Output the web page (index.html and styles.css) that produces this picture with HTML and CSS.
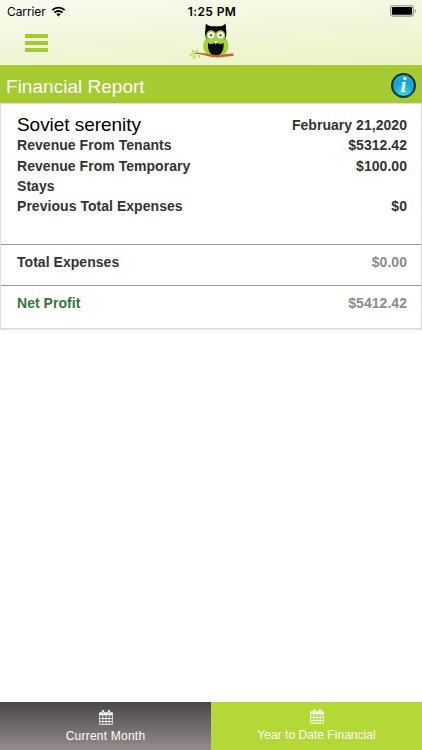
FILE: index.html
```html
<!DOCTYPE html>
<html>
	<head>
		<meta charset="utf-8" />
		<title>Financial Report</title>
		<link rel="stylesheet" href="styles.css">
	</head>
	<body>
		<div class="header">
			<div class="status">
				<div class="carrier">
					<span>Carrier</span>
					<svg width="15" height="11" viewBox="0 0 14 11">
						<path d="M.8 4.200a8.800 8.800 0 0 1 12.400 0M3 6.600a5.700 5.700 0 0 1 8 0" fill="none" stroke="#000" stroke-width="1.900"/>
						<path d="M4.800 8.200a3.200 3.200 0 0 1 4.400 0L7 10.600z"/>
					</svg>
				</div>
				<div class="time">1:25 PM</div>
				<div class="battery">
					<svg width="27" height="12" viewBox="0 0 27 12">
						<rect x=".7" y=".7" width="22.600" height="10.400" rx="2.400" fill="#e9eddc" stroke="#92958a" stroke-width="1.100"/>
						<rect x="2" y="2" width="20" height="7.800" rx="1"/>
						<path d="M24.700 4v4c1.600-.5 1.600-3.500 0-4z" fill="#92958a"/>
					</svg>
				</div>
			</div>
			<div class="nav">
				<div class="menu"><i></i><i></i><i></i></div>
				<!-- owl on a branch -->
				<svg class="logo" width="46" height="38" viewBox="0 0 46 38">
					<path d="M17.500 15c-5 5-4.500 13 1.500 17h15.500c6-4 6.500-12 1.500-17z" fill="#a3d338"/>
					<path d="M17 .5c2 2.500 5 3 9.800 2.700 4.700.3 7.700-.2 9.700-2.700.8 3 .2 4.500.8 7.500.6 4-.5 8-3 10H19.500c-2.500-2-4-6-3.300-10 .6-3 0-4.500.8-7.500z" fill="#0b0b0b"/>
					<path d="M26.800 10c-3.500-5-9.500-2.500-9.500 2.500 0 6.500 4 8.500 9.500 8.500s9.400-2 9.400-8.500c0-5-6-7.500-9.400-2.500z" fill="#a3d338"/>
					<path d="M19 20c2.500 1.600 5 1 7.700-.5 2.800 1.500 5.300 2.100 7.800.5.800 8-2.500 12.500-7.800 12.500S18.500 28 19 20z" fill="#0b0b0b"/>
					<circle cx="22" cy="12.300" r="3.300" fill="#fff"/>
					<circle cx="31.500" cy="12.300" r="3.300" fill="#fff"/>
					<circle cx="22" cy="12.300" r="1.200" fill="#555"/>
					<circle cx="31.500" cy="12.300" r="1.200" fill="#555"/>
					<path d="M25.300 18h3l-1.500 3.800z" fill="#fff"/>
					<path d="M6 30c7-.8 12 1.200 20 2 6 .5 11-1.500 18.500-1.500v2.500c-7 0-13 2-19 1.300-8-.8-12-3.800-19.500-3.300z" fill="#cf5f32"/>
					<path d="M5.500 30l-2-2M8 29v-1.500M3.500 31.500l-2 .3M6 33l-1.500 2M10 32.500l.5 1.500" stroke="#b3d957" stroke-width="1.800" stroke-linecap="round"/>
				</svg>
			</div>
		</div>
		<div class="title">
			<h1>Financial Report</h1>
			<div class="info">i</div>
		</div>
		<div class="card">
			<div class="revenue">
				<div class="row"><span class="name">Soviet serenity</span><b>February 21,2020</b></div>
				<div class="row"><b>Revenue From Tenants</b><b>$5312.42</b></div>
				<div class="row"><b>Revenue From Temporary<br>Stays</b><b>$100.00</b></div>
				<div class="row"><b>Previous Total Expenses</b><b>$0</b></div>
			</div>
			<div class="row total"><b>Total Expenses</b><b class="grey">$0.00</b></div>
			<div class="row profit"><b class="green">Net Profit</b><b class="grey">$5412.42</b></div>
		</div>
		<div class="tabs">
			<div class="tab month">
				<svg width="14" height="15" viewBox="0 0 14 15">
					<path d="M.6 3h12.800v11.400H.6zM.6 8.500h12.800M.6 11.500h12.800M3.800 5v9M7 5v9M10.200 5v9" fill="none" stroke="#fff" stroke-width=".8"/>
					<path d="M.5 2.500h13v2.700H.5z" fill="#fff"/>
					<path d="M4 1.200v2.300M10 1.200v2.300" stroke="#fff" stroke-width="2.400" stroke-linecap="round"/>
					<path d="M4 1.500v2.300M10 1.500v2.300" stroke="#666" stroke-width=".8"/>
				</svg>
				<span>Current Month</span>
			</div>
			<div class="tab year">
				<svg width="14" height="15" viewBox="0 0 14 15">
					<path d="M.6 3h12.800v11.400H.6zM.6 8.500h12.800M.6 11.500h12.800M3.800 5v9M7 5v9M10.200 5v9" fill="none" stroke="#fff" stroke-width=".8"/>
					<path d="M.5 2.500h13v2.700H.5z" fill="#fff"/>
					<path d="M4 1.200v2.300M10 1.200v2.300" stroke="#fff" stroke-width="2.400" stroke-linecap="round"/>
					<path d="M4 1.500v2.300M10 1.500v2.300" stroke="#b4d936" stroke-width=".8"/>
				</svg>
				<span>Year to Date Financial</span>
			</div>
		</div>
	</body>
</html>
```
FILE: styles.css
```css
*{margin: 0;padding: 0;box-sizing: border-box;}
body{height: 750px;display: flex;flex-direction: column;overflow: hidden;background: #fff;font-family: "Liberation Sans",Arial,sans-serif;}
svg{display: block;}
.header{height: 65px;background: linear-gradient(176deg,#f7faec 10%,#eaf4c6 95%);}
.status{height: 22px;display: grid;grid-template-columns: 1fr auto 1fr;align-items: center;padding: 0 5px 0 7px;font-family: Inter,"Liberation Sans",sans-serif;font-size: 12px;}
.carrier{display: flex;align-items: center;gap: 5px;}
.carrier span{letter-spacing: -.1px;}
.time{font-weight: 600;letter-spacing: .4px;}
.battery{justify-self: end;}
.nav{height: 43px;display: grid;grid-template-columns: 1fr auto 1fr;padding: 0 24px 0 25px;}
.menu{padding-top: 12px;}
.menu i{display: block;width: 23px;height: 4px;margin-bottom: 3px;background: #a5c930;}
.logo{margin-top: 1px;}
.title{height: 38px;display: flex;align-items: center;justify-content: space-between;padding: 3px 6px 0 6px;background: #a6ca32;color: #fff;}
.title h1{padding-top: 2px;font-size: 19px;font-weight: normal;letter-spacing: .02px;line-height: 36px;}
.info{width: 25px;height: 25px;border: 2px solid #12333a;border-radius: 50%;background: radial-gradient(circle at 50% 85%,#35d8ee,#169fd0 55%,#3fb3da);font: italic bold 21px/20px "Liberation Serif",serif;text-align: center;}
.card{height: 226px;border: 1px solid #ddd;box-shadow: 0 1px 2px rgba(0,0,0,.12);color: #333;font-size: 14px;line-height: 20.300px;}
.revenue{height: 140px;padding-top: 11px;}
.row{display: flex;justify-content: space-between;padding: 0 14px 0 16px;letter-spacing: .04px;}
.name{color: #000;font-size: 19px;letter-spacing: -.05px;}
.total{height: 41px;border-top: 1px solid #999;padding-top: 7px;}
.profit{height: 43px;border-top: 1px solid #999;padding-top: 7px;}
.grey{color: #8b8b8b;}
.green{color: #347539;}
.tabs{height: 48px;display: flex;margin-top: auto;color: #fff;font-size: 12px;}
.tab{flex: 1;display: flex;flex-direction: column;align-items: center;gap: 4px;}
.month{padding-top: 8px;background: linear-gradient(#4a4749,#958b8c);}
.month span{letter-spacing: .22px;}
.year{padding-top: 7px;background: #b4d936;}
.year span{letter-spacing: .04px;}
```
